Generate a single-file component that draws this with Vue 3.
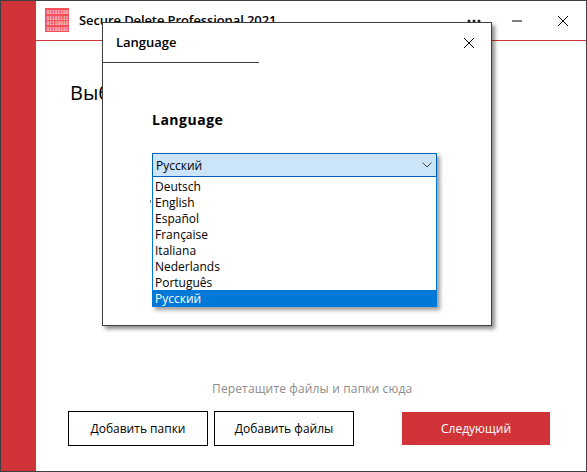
<script setup>
const langs = ['Deutsch', 'English', 'Español', 'Française', 'Italiana', 'Nederlands', 'Português', 'Русский']
const rows = ['01101100', '01101111', '01110010', '01100101']
</script>

<template>
  <div class="win">
    <aside class="side"></aside>
    <main class="main">
      <header class="head">
        <svg class="logo" width="24" height="24" viewBox="0 0 24 24">
          <rect width="24" height="24" fill="#f5505c" />
          <text v-for="(r, i) in rows" :key="r" x="1.5" :y="6 + i * 5.6" class="bits">{{ r }}</text>
        </svg>
        <span class="app-title">Secure Delete Professional 2021</span>
        <svg class="dots" width="14" height="4" viewBox="0 0 14 4">
          <circle cx="2" cy="2" r="1.5" fill="#222" />
          <circle cx="7" cy="2" r="1.5" fill="#222" />
          <circle cx="12" cy="2" r="1.5" fill="#222" />
        </svg>
        <svg class="min" width="12" height="12" viewBox="0 0 12 12"><path d="M1 6h10" stroke="#000" fill="none" /></svg>
        <svg class="close" width="12" height="12" viewBox="0 0 12 12"><path d="M1 1l10 10M11 1L1 11" stroke="#000" fill="none" /></svg>
      </header>
      <h1 class="heading">Выберите файлы</h1>
      <p class="drop">Перетащите файлы и папки сюда</p>
      <footer class="foot">
        <button class="btn">Добавить папки</button>
        <button class="btn second">Добавить файлы</button>
        <button class="next">Следующий</button>
      </footer>
    </main>

    <section class="dialog">
      <div class="dlg-head">
        <span class="dlg-title">Language</span>
        <svg class="dlg-close" width="12" height="12" viewBox="0 0 12 12"><path d="M1 1l10 10M11 1L1 11" stroke="#000" fill="none" /></svg>
      </div>
      <div class="dlg-body">
        <h2 class="label">Language</h2>
        <div class="picker">
          <i class="tick"></i>
          <div class="combo">
            <span>Русский</span>
            <svg width="10" height="6" viewBox="0 0 10 6"><path d="M.5.5L5 5 9.5.5" stroke="#444" fill="none" /></svg>
          </div>
          <ul class="list">
            <li v-for="l in langs" :key="l" :class="{ sel: l === 'Русский' }">{{ l }}</li>
          </ul>
        </div>
      </div>
    </section>
  </div>
</template>

<style>
html, body { margin: 0; padding: 0; background: #fff; }
</style>

<style scoped>
.win {
  position: relative;
  width: 587px;
  height: 472px;
  box-sizing: border-box;
  border: 1px solid #3f3f3f;
  display: flex;
  background: #fff;
  overflow: hidden;
  font-family: "Open Sans", "Noto Sans", sans-serif;
  color: #000;
}
.side { width: 35px; background: #d13438; flex: none; }
.main { flex: 1; display: flex; flex-direction: column; min-width: 0; }
.head {
  height: 39px;
  border-bottom: 1px solid #d13438;
  display: flex;
  align-items: flex-start;
  flex: none;
}
.logo { margin: 7px 0 0 9px; flex: none; }
.bits { font: 700 4.6px "Liberation Mono", monospace; fill: #ffd5d8; }
.app-title { margin: 10px 0 0 10px; font-size: 13px; font-weight: 600; line-height: 18px; white-space: nowrap; letter-spacing: -.1px; }
.dots { margin: 18px 0 0 auto; flex: none; }
.min { margin: 14px 0 0 30px; flex: none; }
.close { margin: 14px 17px 0 34px; flex: none; }
.heading { margin: 38px 0 0 34px; font-size: 20px; font-weight: 400; line-height: 28px; }
.drop { margin: auto 0 0; padding-left: 176px; font-size: 12px; line-height: 16px; letter-spacing: .14px; color: #8c8c8c; }
.foot { display: flex; margin: 14px 0 25px 32px; align-items: center; }
.btn {
  width: 140px;
  height: 35px;
  box-sizing: border-box;
  border: 1px solid #000;
  background: #fff;
  font: 400 12px "Open Sans", "Noto Sans", sans-serif;
  color: #000;
  padding: 0;
}
.second { margin-left: 6px; }
.next {
  width: 148px;
  height: 33px;
  margin-left: 48px;
  border: 0;
  padding: 0;
  background: #d13438;
  color: #fff;
  font: 400 12px "Open Sans", "Noto Sans", sans-serif;
}
.dialog {
  position: absolute;
  left: 101px;
  top: 21px;
  width: 390px;
  height: 304px;
  box-sizing: border-box;
  border: 1px solid #3f3f3f;
  background: #fff;
  box-shadow: 3px 3px 4px rgba(0, 0, 0, .45);
}
.dlg-head {
  position: relative;
  width: 156px;
  height: 39px;
  border-bottom: 1px solid #3f3f3f;
}
.dlg-title { position: absolute; left: 13px; top: 10px; font-size: 13px; font-weight: 600; line-height: 18px; }
.dlg-close { position: absolute; left: 360px; top: 14px; }
.dlg-body { padding: 47px 0 0 49px; }
.label { margin: 0; font-size: 14px; font-weight: 700; line-height: 20px; letter-spacing: .5px; }
.picker { position: relative; width: 285px; margin-top: 23px; box-shadow: 3px 3px 4px rgba(0, 0, 0, .4); font-size: 12px; }
.tick { position: absolute; left: -2px; top: 47px; width: 1px; height: 3px; background: #777; }
.combo {
  height: 24px;
  box-sizing: border-box;
  border: 1px solid #005fb8;
  background: #cce4f7;
  display: flex;
  align-items: center;
  justify-content: space-between;
  padding: 0 4px 0 3px;
}
.list {
  list-style: none;
  margin: 0;
  padding: 1px 0 0;
  border: 1px solid #0078d7;
  border-top: 0;
  border-bottom: 0;
  background: #fff;
}
.list li { height: 16px; line-height: 18px; padding-left: 2px; }
.list li.sel { background: #0078d7; color: #fff; margin: 0 -1px; padding-left: 3px; height: 17px; line-height: 17px; }
</style>
